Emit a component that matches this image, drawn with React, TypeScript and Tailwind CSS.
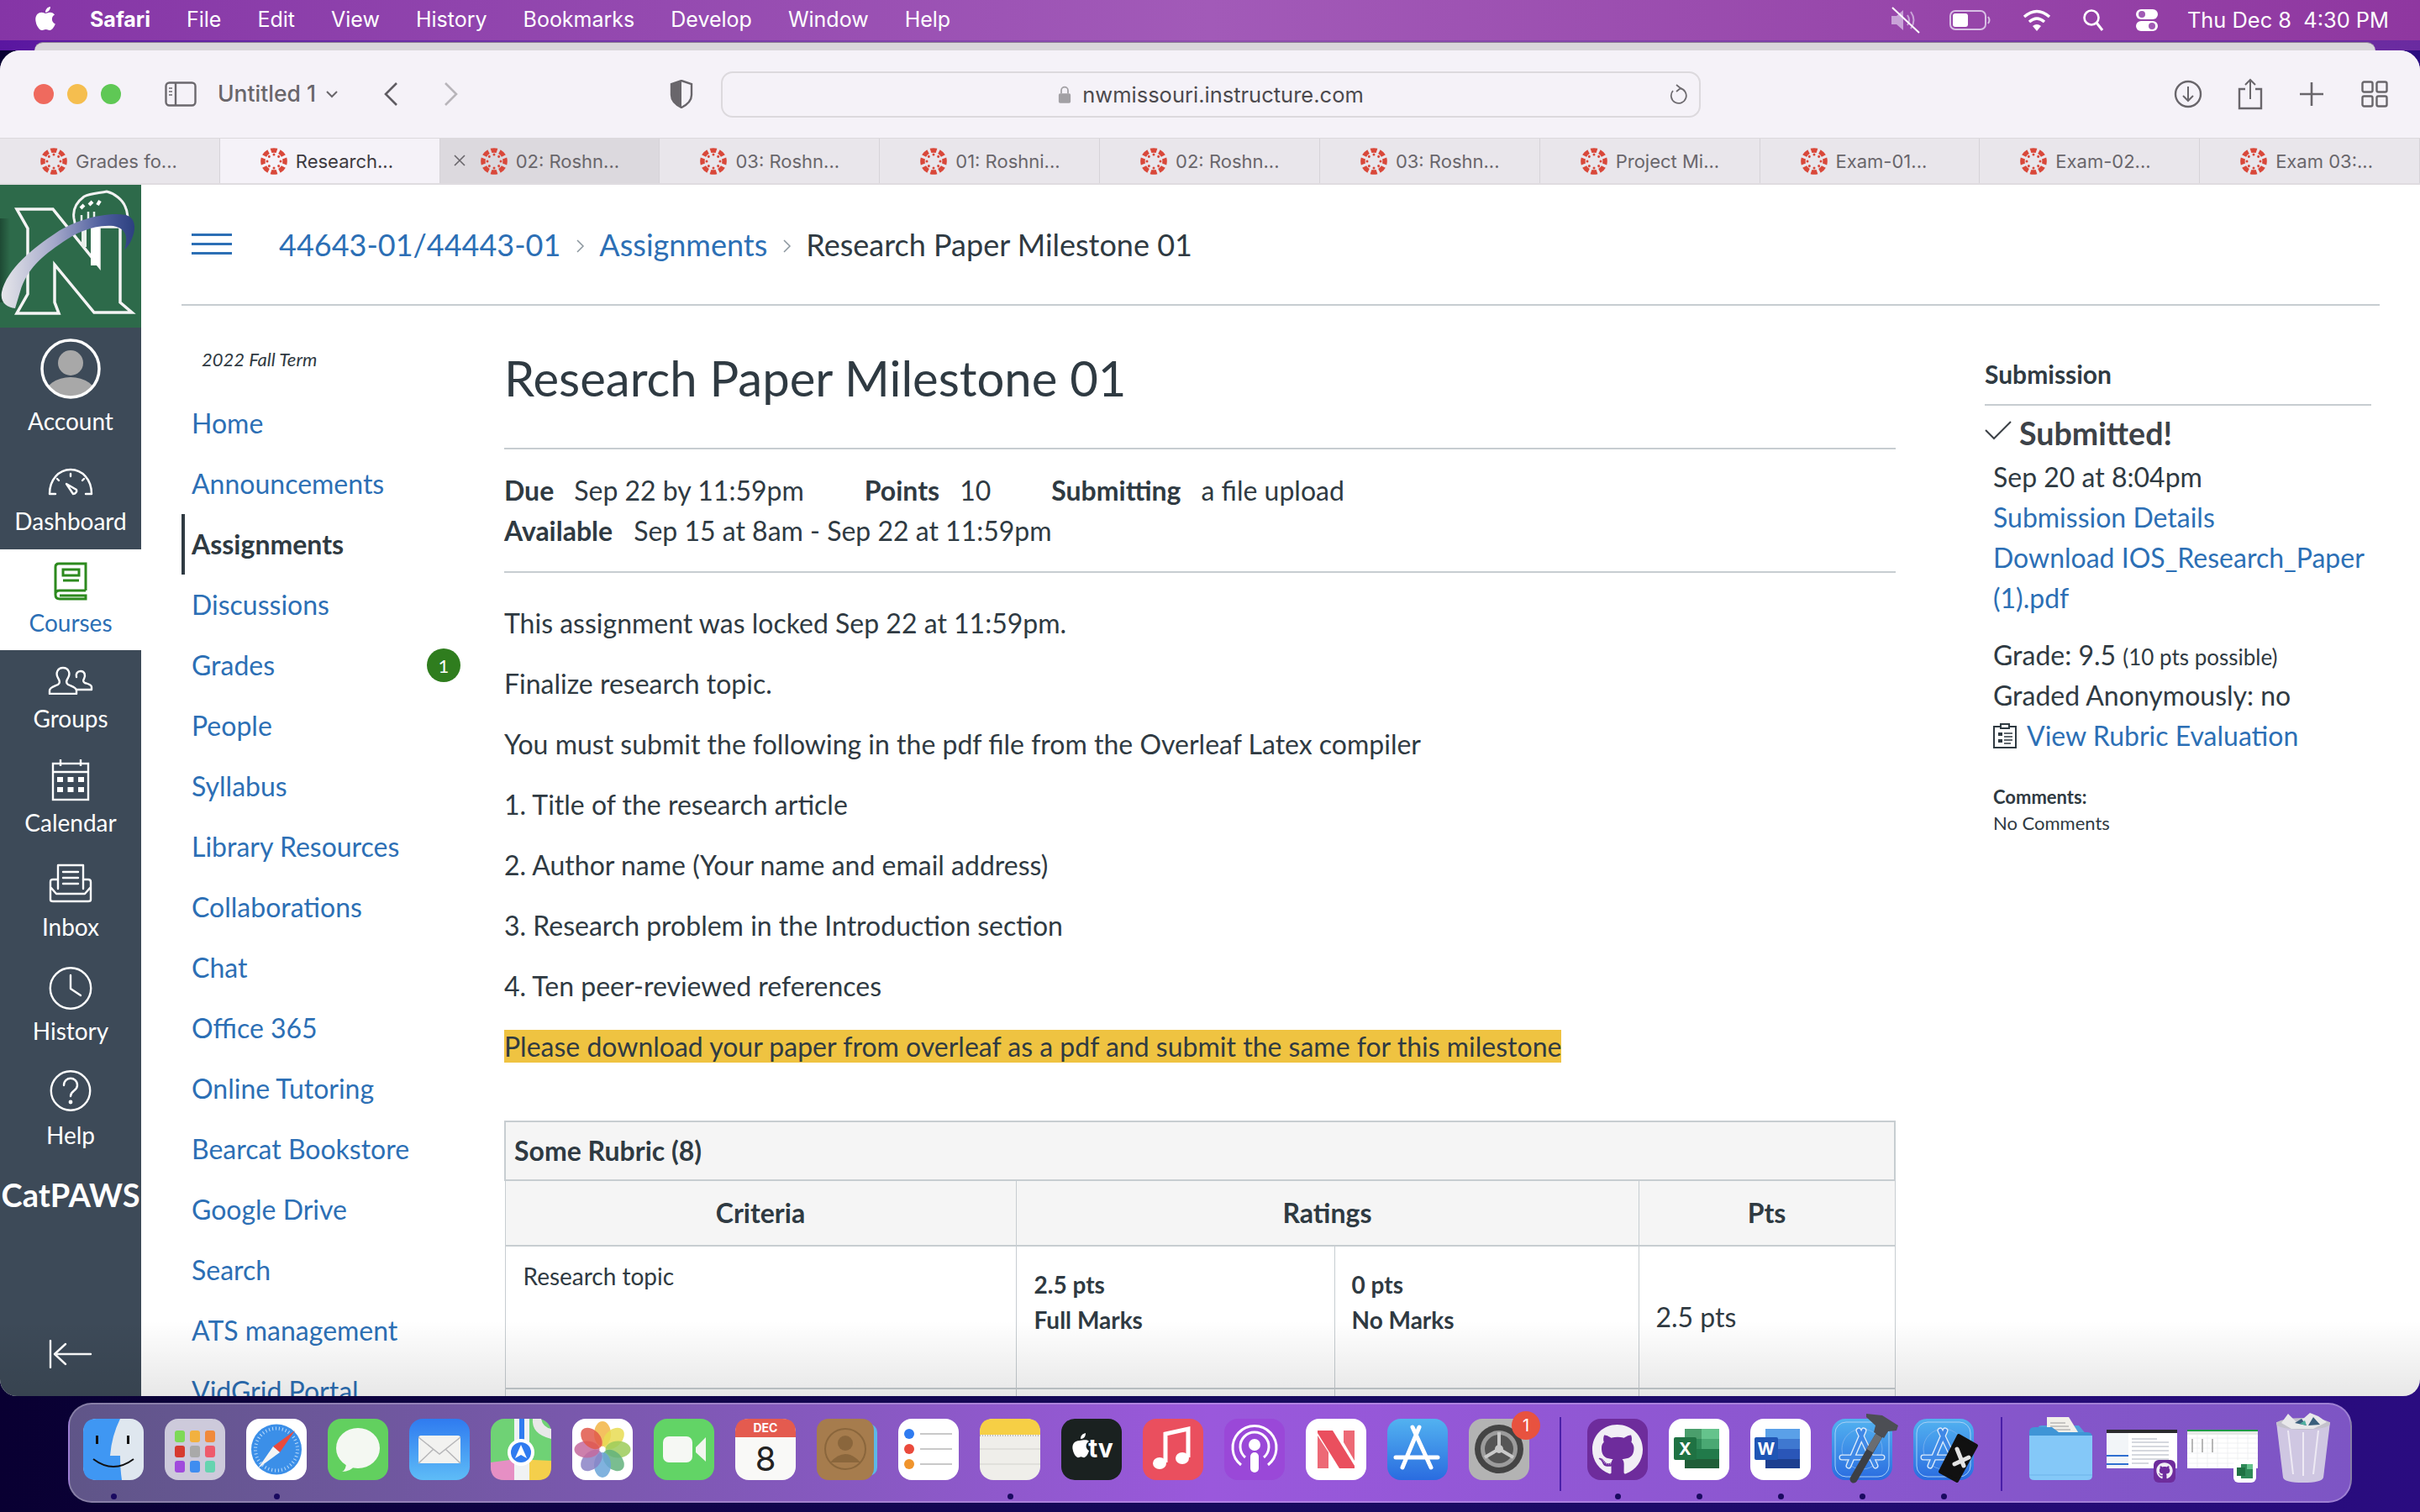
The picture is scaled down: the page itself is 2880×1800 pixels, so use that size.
import React from "react";
import { FaApple, FaGithub } from "react-icons/fa";

const Favicon = () => (
  <svg viewBox="0 0 32 32" className="w-[32px] h-[32px] shrink-0">
    {[0, 45, 90, 135, 180, 225, 270, 315].map((a) => (
      <g key={a} transform={`rotate(${a} 16 16)`}>
        <path d="M11.6 0.8 Q16 -0.4 20.4 0.8 L18.6 6 Q16 5.3 13.4 6 Z" fill="#d9483a" />
        <circle cx="16" cy="8" r="1.5" fill="#d9483a" />
      </g>
    ))}
  </svg>
);

const tabs = [
  "Grades fo...",
  "Research...",
  "02: Roshn...",
  "03: Roshn...",
  "01: Roshni...",
  "02: Roshn...",
  "03: Roshn...",
  "Project Mi...",
  "Exam-01...",
  "Exam-02...",
  "Exam 03:...",
];

const navItems = [
  "Home",
  "Announcements",
  "Assignments",
  "Discussions",
  "Grades",
  "People",
  "Syllabus",
  "Library Resources",
  "Collaborations",
  "Chat",
  "Office 365",
  "Online Tutoring",
  "Bearcat Bookstore",
  "Google Drive",
  "Search",
  "ATS management",
  "VidGrid Portal",
];

const paras = [
  "This assignment was locked Sep 22 at 11:59pm.",
  "Finalize research topic.",
  "You must submit the following in the pdf file from the Overleaf Latex compiler",
  "1. Title of the research article",
  "2. Author name (Your name and email address)",
  "3. Research problem in the Introduction section",
  "4. Ten peer-reviewed references",
];

function SideItem({ cls, labelCls, label, children, active }: { cls: string; labelCls: string; label: string; children: React.ReactNode; active?: boolean }) {
  return (
    <div className={`flex flex-col items-center w-full shrink-0 ${cls} ${active ? "bg-white" : ""}`}>
      {children}
      <div className={`h-[40px] leading-[40px] text-[28px] ${labelCls} ${active ? "text-[#2c6fb5]" : "text-white"}`}>{label}</div>
    </div>
  );
}

const Logo = () => (
  <svg viewBox="0 0 168 170" className="w-[168px] h-[170px] block shrink-0">
    <defs>
      <linearGradient id="sw" x1="0" x2="1" y1="0" y2="0">
        <stop offset="0" stopColor="#e6e6ea" />
        <stop offset="0.4" stopColor="#a4a8ca" />
        <stop offset="0.75" stopColor="#4f5f9e" />
        <stop offset="1" stopColor="#2c4080" />
      </linearGradient>
      <linearGradient id="ld" x1="0" x2="1" y1="0" y2="0">
        <stop offset="0" stopColor="#1e4a34" />
        <stop offset="1" stopColor="#2d6a4a" />
      </linearGradient>
    </defs>
    <rect width="168" height="170" fill="#2d6a4a" />
    <rect width="12" y="40" height="100" fill="url(#ld)" />
    <path d="M88 40 C86 28 92 20 100 14 C108 10 118 10 127 8 C136 10 146 18 149 26 C152 32 152 36 152 42 L143 50 H90 Z" fill="#2d6a4a" stroke="#f2f2f2" strokeWidth="3" />
    <path d="M20 29 H63 L118 97 V50 H143 V140 L157 152 H112 L65 95 V140 L70 153 H20 L33 130 V52 Z" fill="#2d6a4a" stroke="#f4f4f4" strokeWidth="3.5" strokeLinejoin="miter" />
    <rect x="108" y="40" width="10" height="56" fill="#fff" />
    <rect x="97" y="48" width="6" height="26" fill="#e8f0ea" />
    <path d="M96 28 L100 24 M106 24 L110 20 M116 24 L119 19" stroke="#fff" strokeWidth="4" />
    <path d="M97 36V44M105 32V44M112 32V44" stroke="#e8f0ea" strokeWidth="2.5" />
    <path d="M2 128 C8 100 40 75 67 57 C90 42 125 32 150 36 C160 39 163 50 157 64 C155 70 150 76 148 77 C153 62 150 52 135 49 C110 47 90 58 75 68 C50 85 32 100 24 127 L18 147 C8 146 0 140 2 128Z" fill="url(#sw)" />
  </svg>
);

const Avatar = () => (
  <svg viewBox="0 0 72 72" className="w-[72px] h-[72px]">
    <clipPath id="av"><circle cx="36" cy="36" r="33" /></clipPath>
    <g clipPath="url(#av)">
      <circle cx="36" cy="36" r="34" fill="#3d4a58" />
      <circle cx="36" cy="29" r="15" fill="#a8a8a8" />
      <ellipse cx="36" cy="68" rx="31" ry="22" fill="#a8a8a8" />
    </g>
    <circle cx="36" cy="36" r="34" fill="none" stroke="#fff" strokeWidth="3.5" />
  </svg>
);

const s = { fill: "none", stroke: "#fff", strokeWidth: 2.4, strokeLinecap: "round" as const, strokeLinejoin: "round" as const };

function Dock({ children, dot, cls }: { children: React.ReactNode; dot?: boolean; cls?: string }) {
  return (
    <div className={`relative w-[72px] shrink-0 flex flex-col items-center ${cls ?? ""}`}>
      <div className="w-[72px] h-[73px]">{children}</div>
      {dot && <div className="mt-[16px] w-[7px] h-[7px] rounded-full bg-[#1a0a60]" />}
    </div>
  );
}

const V = ({ children }: { children: React.ReactNode }) => (
  <svg viewBox="0 0 72 73" className="w-[72px] h-[73px] block overflow-visible">{children}</svg>
);

const petals = ["#f2b544", "#e8dc52", "#9ccb5b", "#63b27d", "#6aa5d8", "#8a83c6", "#c46a9e", "#e0584a"];

const XcodeA = () => (
  <>
    <rect x="4" y="4" width="64" height="65" rx="13" fill="none" stroke="#a8d0f6" strokeWidth="1" />
    <circle cx="36" cy="36" r="24" fill="none" stroke="#7fb4ee" strokeWidth="0.8" />
    <g strokeLinecap="round">
      <path d="M38 14L20 56M32 14l20 42M12 46h48" stroke="#dcebfb" strokeWidth="7" />
      <path d="M38 14L20 56M32 14l20 42M12 46h48" stroke="#3f88e6" strokeWidth="4.4" />
    </g>
  </>
);

const blueGrad = (id: string) => (
  <defs>
    <linearGradient id={id} x1="0" x2="0" y1="0" y2="1"><stop offset="0" stopColor="#52b2f0" /><stop offset="1" stopColor="#2a6ce0" /></linearGradient>
  </defs>
);

export default function App() {
  return (
    <div className="w-[2880px] h-[1800px] flex flex-col overflow-hidden bg-gradient-to-r from-[#090032] via-[#160a5c] to-[#2a0c80] font-['Lato',sans-serif] text-[#2f3a42]">
      {/* Menu bar */}
      <div className="h-[48px] shrink-0 flex items-center bg-gradient-to-r from-[#8535a6] via-[#a25ab8] to-[#8f37a0] text-white font-['Inter',sans-serif] text-[25px]">
        <FaApple className="ml-[38px] text-[32px] -mt-[4px]" />
        <span className="ml-[37px] font-bold">Safari</span>
        <div className="ml-[43px] flex gap-[43px]">
          {["File", "Edit", "View", "History", "Bookmarks", "Develop", "Window", "Help"].map((m) => (
            <span key={m}>{m}</span>
          ))}
        </div>
        <div className="ml-auto flex items-center mr-[37px]">
          <svg viewBox="0 0 38 32" className="w-[38px] h-[32px]">
            <path d="M3 11h6l8-7v24l-8-7H3z" fill="#c9a3d8" />
            <path d="M22 10q4 6 0 12M26 6q7 10 0 20" fill="none" stroke="#c9a3d8" strokeWidth="2" />
            <path d="M4 1 L36 31" stroke="#fff" strokeWidth="2" />
          </svg>
          <svg viewBox="0 0 50 24" className="ml-[34px] w-[50px] h-[24px]">
            <rect x="1" y="1" width="42" height="22" rx="6" fill="none" stroke="#d8c0e4" strokeWidth="2" />
            <rect x="4" y="4" width="18" height="16" rx="3" fill="#fff" />
            <path d="M46 8q3 4 0 8" fill="none" stroke="#d8c0e4" strokeWidth="2" />
          </svg>
          <svg viewBox="0 0 34 28" className="ml-[37px] w-[34px] h-[28px]">
            <path d="M2 10q15-13 30 0M8 16q9-8 18 0" fill="none" stroke="#fff" strokeWidth="3.4" />
            <path d="M12 21q5-4 10 0L17 27z" fill="#fff" />
          </svg>
          <svg viewBox="0 0 26 28" className="ml-[37px] w-[26px] h-[28px]">
            <circle cx="11" cy="11" r="8.5" fill="none" stroke="#fff" strokeWidth="2.6" />
            <path d="M17 17l7 9" stroke="#fff" strokeWidth="3" />
          </svg>
          <svg viewBox="0 0 28 28" className="ml-[37px] w-[28px] h-[28px]">
            <rect x="1" y="1" width="26" height="12" rx="6" fill="#fff" />
            <circle cx="8" cy="7" r="4" fill="#a05ab4" />
            <rect x="1" y="15" width="26" height="12" rx="6" fill="#fff" />
            <circle cx="20" cy="21" r="4" fill="#a05ab4" />
          </svg>
          <span className="ml-[34px] text-[25.4px] whitespace-pre">Thu Dec 8  4:30 PM</span>
        </div>
      </div>

      {/* Window behind */}
      <div className="h-[12px] shrink-0 bg-gradient-to-r from-[#5a16a0] via-[#9050ae] to-[#6a2aa0] pl-[41px] pr-[53px] pt-[2px]">
        <div className="h-[10px] rounded-t-[10px] bg-[#d9d6da] border-t border-[#8d7f94]" />
      </div>

      {/* Safari window */}
      <div className="relative h-[1602px] shrink-0 flex flex-col rounded-t-[24px] rounded-b-[20px] overflow-hidden bg-white">
        <div className="h-[104px] shrink-0 bg-[#f5f2f8] flex items-center relative">
          <div className="ml-[40px] flex gap-[16px]">
            <div className="w-[24px] h-[24px] rounded-full bg-[#ef6a5e]" />
            <div className="w-[24px] h-[24px] rounded-full bg-[#f5be4f]" />
            <div className="w-[24px] h-[24px] rounded-full bg-[#5fc855]" />
          </div>
          <svg viewBox="0 0 38 30" className="ml-[52px] w-[38px] h-[30px]">
            <rect x="1.5" y="1.5" width="35" height="27" rx="4" fill="none" stroke="#6b686d" strokeWidth="2.4" />
            <path d="M13 2v26" stroke="#6b686d" strokeWidth="2.4" />
            <path d="M5 8h4M5 12h4M5 16h4" stroke="#6b686d" strokeWidth="1.6" />
          </svg>
          <span className="ml-[25px] font-['Inter',sans-serif] text-[26.5px] font-medium text-[#69666b]">Untitled 1</span>
          <svg viewBox="0 0 16 10" className="ml-[11px] w-[16px] h-[10px]">
            <path d="M2 2l6 6 6-6" fill="none" stroke="#69666b" strokeWidth="2" />
          </svg>
          <svg viewBox="0 0 20 30" className="ml-[52px] w-[20px] h-[30px]">
            <path d="M17 2L4 15l13 13" fill="none" stroke="#5f5c62" strokeWidth="2.6" />
          </svg>
          <svg viewBox="0 0 20 30" className="ml-[52px] w-[20px] h-[30px]">
            <path d="M3 2l13 13L3 28" fill="none" stroke="#b8b5ba" strokeWidth="2.6" />
          </svg>
          <svg viewBox="0 0 28 34" className="ml-[250px] w-[28px] h-[34px]">
            <path d="M14 1l12 4v13c0 8-6 12-12 15C8 30 2 26 2 18V5z" fill="none" stroke="#69666b" strokeWidth="2.4" />
            <path d="M14 1L2 5v13c0 8 6 12 12 15z" fill="#69666b" />
          </svg>
          <div className="ml-[33px] w-[1166px] h-[55px] rounded-[14px] border-2 border-[#dcd9dd] flex items-center justify-center relative font-['Inter',sans-serif] text-[25.5px] text-[#4c4a4e]">
            <svg viewBox="0 0 18 24" className="w-[16px] h-[22px] mr-[13px] mt-[2px]">
              <rect x="1" y="10" width="16" height="13" rx="2" fill="#a2a0a4" />
              <path d="M4.5 10V6a4.5 4.5 0 0 1 9 0v4" fill="none" stroke="#a2a0a4" strokeWidth="2" />
            </svg>
            <span className="mt-[2px]">nwmissouri.instructure.com</span>
            <svg viewBox="0 0 24 26" className="absolute right-[14px] top-[13px] w-[24px] h-[26px]">
              <path d="M15 5a9 9 0 1 1-8 3" fill="none" stroke="#6e6b70" strokeWidth="1.8" />
              <path d="M11 1l5 4-5 4" fill="none" stroke="#6e6b70" strokeWidth="1.8" />
            </svg>
          </div>
          <svg viewBox="0 0 34 34" className="ml-[563px] w-[34px] h-[34px]">
            <circle cx="17" cy="17" r="15" fill="none" stroke="#69666b" strokeWidth="2.4" />
            <path d="M17 8v17M11 19l6 6 6-6" fill="none" stroke="#69666b" strokeWidth="2" />
          </svg>
          <svg viewBox="0 0 30 38" className="ml-[42px] w-[30px] h-[38px]">
            <path d="M9 13H2v23h26V13h-7" fill="none" stroke="#69666b" strokeWidth="2.4" />
            <path d="M15 25V2M9 8l6-6 6 6" fill="none" stroke="#69666b" strokeWidth="2" />
          </svg>
          <svg viewBox="0 0 28 28" className="ml-[44px] w-[28px] h-[28px]">
            <path d="M14 0v28M0 14h28" stroke="#69666b" strokeWidth="2.6" />
          </svg>
          <svg viewBox="0 0 32 32" className="ml-[45px] w-[32px] h-[32px]">
            <rect x="1.5" y="1.5" width="12" height="12" rx="2" fill="none" stroke="#69666b" strokeWidth="2.4" />
            <rect x="18.5" y="1.5" width="12" height="12" rx="2" fill="none" stroke="#69666b" strokeWidth="2.4" />
            <rect x="1.5" y="18.5" width="12" height="12" rx="2" fill="none" stroke="#69666b" strokeWidth="2.4" />
            <rect x="18.5" y="18.5" width="12" height="12" rx="2" fill="none" stroke="#69666b" strokeWidth="2.4" />
          </svg>
        </div>

        {/* Tabs */}
        <div className="h-[56px] shrink-0 flex bg-[#e9e6eb] border-t border-[#dcd9dd] border-b-2 border-b-[#dfdce0] font-['Inter',sans-serif] text-[22px] text-[#69666b]">
          {tabs.map((t, i) => (
            <div
              key={i}
              className={`flex-1 flex items-center pl-[48px] gap-[10px] border-r border-[#d6d3d8] relative ${i === 1 ? "bg-[#f5f2f8] text-[#3d3a40]" : i === 2 ? "bg-[#dcd9de]" : ""}`}
            >
              {i === 2 && (
                <svg viewBox="0 0 16 16" className="absolute left-[15px] top-[18px] w-[16px] h-[16px]">
                  <path d="M2 2l12 12M14 2L2 14" stroke="#69666b" strokeWidth="1.6" />
                </svg>
              )}
              <Favicon />
              <span className="whitespace-nowrap mt-[2px]">{t}</span>
            </div>
          ))}
        </div>

        {/* Canvas */}
        <div className="flex-1 min-h-0 flex overflow-hidden">
          <div className="w-[168px] shrink-0 flex flex-col bg-[#3d4a58]">
            <Logo />
            <SideItem cls="h-[144px] pt-[13px]" labelCls="mt-[6px]" label="Account"><Avatar /></SideItem>
            <SideItem cls="h-[120px] pt-[23px]" labelCls="mt-[10px]" label="Dashboard">
              <svg viewBox="0 0 54 33" className="w-[54px] h-[33px]" {...s}>
                <path d="M9 31H2C2 14 13 2 27 2s25 12 25 29h-7" />
                <path d="M22 19l8 12c3 0 5-3 4-5z" />
                <path d="M27 7v3M11 13l2 2M43 13l-2 2" />
              </svg>
            </SideItem>
            <SideItem cls="h-[120px] pt-[15px]" labelCls="mt-[6px]" label="Courses" active>
              <svg viewBox="0 0 40 46" className="w-[40px] h-[46px]" fill="none" stroke="#2d8a1e" strokeWidth="3">
                <path d="M38 34V2H6Q2 2 2 6v33q0 5 5 5h31v-4H7M2 38q0-4 5-4h31" />
                <rect x="11" y="9" width="19" height="7" />
                <path d="M11 22h19" />
              </svg>
            </SideItem>
            <SideItem cls="h-[118px] pt-[19px]" labelCls="mt-[8px]" label="Groups">
              <svg viewBox="0 0 54 34" className="w-[54px] h-[34px]" {...s}>
                <path d="M2 33v-4c0-4 6-5 10-7 3-2 2-5 0-8-3-5-1-12 6-12s9 7 6 12c-2 3-3 6 0 8 4 2 10 3 10 7v4z" />
                <path d="M34 28h18v-3c0-3-5-4-8-5-3-2-2-3-1-5 2-4 1-9-4-9-4 0-6 3-5 7" />
              </svg>
            </SideItem>
            <SideItem cls="h-[124px] pt-[10px]" labelCls="mt-[5px]" label="Calendar">
              <svg viewBox="0 0 46 52" className="w-[46px] h-[52px]" fill="none" stroke="#fff" strokeWidth="2.4">
                <rect x="2" y="7" width="42" height="43" />
                <path d="M2 17h42M11 2v8M35 2v8" />
                <g fill="#fff" stroke="none">
                  <rect x="7" y="23" width="7" height="6" /><rect x="19.5" y="23" width="7" height="6" /><rect x="32" y="23" width="7" height="6" />
                  <rect x="7" y="35" width="7" height="6" /><rect x="19.5" y="35" width="7" height="6" /><rect x="32" y="35" width="7" height="6" />
                </g>
              </svg>
            </SideItem>
            <SideItem cls="h-[124px] pt-[12px]" labelCls="mt-[8px]" label="Inbox">
              <svg viewBox="0 0 52 47" className="w-[52px] h-[47px]" {...s}>
                <path d="M11 30V2h30v28" />
                <path d="M17 10h18M17 17h18M17 24h18" />
                <path d="M11 19H5q-3 0-3 3v21q0 2 3 2h42q3 0 3-2V22q0-3-3-3h-6M2 28l7 8h34l7-8" />
              </svg>
            </SideItem>
            <SideItem cls="h-[124px] pt-[11px]" labelCls="mt-[5px]" label="History">
              <svg viewBox="0 0 52 51" className="w-[52px] h-[51px]" {...s}>
                <circle cx="26" cy="25.5" r="24.2" />
                <path d="M26 10v16l12 8" />
              </svg>
            </SideItem>
            <SideItem cls="h-[126px] pt-[10px]" labelCls="mt-[8px]" label="Help">
              <svg viewBox="0 0 50 49" className="w-[50px] h-[49px]" {...s}>
                <circle cx="25" cy="24.5" r="23.2" />
                <path d="M17 18c0-11 16-11 16 0 0 7-8 6-8 13" />
                <circle cx="25" cy="38" r="1.2" fill="#fff" />
              </svg>
            </SideItem>
            <div className="pt-[12px] h-[52px] shrink-0 text-center font-bold text-white text-[38px] leading-[40px] whitespace-nowrap">CatPAWS</div>
            <div className="mt-auto mb-[33px] flex justify-center">
              <svg viewBox="0 0 52 34" className="w-[52px] h-[34px]" {...s}>
                <path d="M2 1v32M50 17H9M20 5L7 17l13 12" />
              </svg>
            </div>
          </div>

          <div className="flex-1 min-w-0 flex flex-col pl-[48px] pr-[48px]">
            <div className="h-[144px] shrink-0 border-b-2 border-[#c7cdd1] flex items-center pl-[12px] text-[36px]">
              <div className="w-[48px] flex flex-col gap-[8px] mb-[2px]">
                <div className="h-[3px] bg-[#2c6fb5]" />
                <div className="h-[3px] bg-[#2c6fb5]" />
                <div className="h-[3px] bg-[#2c6fb5]" />
              </div>
              <span className="ml-[56px] text-[#2c6fb5]">44643-01/44443-01</span>
              <svg viewBox="0 0 12 18" className="ml-[18px] w-[12px] h-[18px] mt-[4px]">
                <path d="M2 2l7 7-7 7" fill="none" stroke="#8b969e" strokeWidth="1.5" />
              </svg>
              <span className="ml-[16px] text-[#2c6fb5]">Assignments</span>
              <svg viewBox="0 0 12 18" className="ml-[18px] w-[12px] h-[18px] mt-[4px]">
                <path d="M2 2l7 7-7 7" fill="none" stroke="#8b969e" strokeWidth="1.5" />
              </svg>
              <span className="ml-[16px]">Research Paper Milestone 01</span>
            </div>

            <div className="flex-1 min-h-0 flex">
              {/* Course nav */}
              <div className="w-[384px] shrink-0">
                <div className="mt-[49px] ml-[24px] h-[30px] leading-[30px] italic text-[22px]">2022 Fall Term</div>
                <div className="mt-[25px] flex flex-col">
                  {navItems.map((n) => (
                    <div
                      key={n}
                      className={`h-[72px] shrink-0 flex items-center text-[32px] pr-[20px] ${n === "Assignments" ? "font-bold border-l-4 border-[#2f3a42] pl-[8px] text-[#2f3a42]" : "pl-[12px] text-[#2c6fb5]"}`}
                    >
                      <span>{n}</span>
                      {n === "Grades" && (
                        <span className="ml-auto mr-[32px] w-[40px] h-[40px] rounded-full bg-[#2f7d1e] text-white text-[22px] flex items-center justify-center">1</span>
                      )}
                    </div>
                  ))}
                </div>
              </div>

              {/* Main */}
              <div className="w-[1656px] shrink-0">
                <h1 className="mt-[41px] h-[90px] leading-[90px] text-[58px] font-normal">Research Paper Milestone 01</h1>
                <div className="mt-[38px] border-t-2 border-b-2 border-[#c7cdd1] h-[149px] pt-[25px] text-[32px] leading-[48px]">
                  <div className="flex">
                    <b>Due</b><span className="ml-[24px]">Sep 22 by 11:59pm</span>
                    <b className="ml-[72px]">Points</b><span className="ml-[24px]">10</span>
                    <b className="ml-[72px]">Submitting</b><span className="ml-[24px]">a file upload</span>
                  </div>
                  <div className="flex">
                    <b>Available</b><span className="ml-[25px]">Sep 15 at 8am - Sep 22 at 11:59pm</span>
                  </div>
                </div>
                <div className="mt-[36px] flex flex-col gap-[24px] text-[32px] leading-[48px] items-start">
                  {paras.map((p) => (
                    <p key={p}>{p}</p>
                  ))}
                  <p><span className="bg-[#efc341]">Please download your paper from overleaf as a pdf and submit the same for this milestone</span></p>
                </div>
                <table className="mt-[64px] w-[1654px] table-fixed border-collapse text-[32px]">
                  <colgroup>
                    <col className="w-[608px]" />
                    <col className="w-[379px]" />
                    <col className="w-[362px]" />
                    <col className="w-[305px]" />
                  </colgroup>
                  <thead>
                    <tr className="h-[70px] bg-[#f5f5f5]">
                      <th colSpan={4} className="border-2 border-[#c7cdd1] text-left pl-[10px] font-bold">Some Rubric (8)</th>
                    </tr>
                    <tr className="h-[78px] bg-[#f5f5f5]">
                      <th className="border-x border-b-2 border-[#c7cdd1] font-bold">Criteria</th>
                      <th colSpan={2} className="border-x border-b-2 border-[#c7cdd1] font-bold">Ratings</th>
                      <th className="border-x border-b-2 border-[#c7cdd1] font-bold">Pts</th>
                    </tr>
                  </thead>
                  <tbody>
                    <tr className="h-[170px]">
                      <td className="border-x border-b-2 border-[#c7cdd1] align-top pl-[21px] pt-[16px] text-[28px] leading-[38px]">Research topic</td>
                      <td className="border-x border-b-2 border-[#c7cdd1] align-top pl-[21px] pt-[24px] text-[28px] leading-[42px] font-bold">2.5 pts<br />Full Marks</td>
                      <td className="border-x border-b-2 border-[#c7cdd1] align-top pl-[20px] pt-[24px] text-[28px] leading-[42px] font-bold">0 pts<br />No Marks</td>
                      <td className="border-x border-b-2 border-[#c7cdd1] pl-[20px] text-[32px]">2.5 pts</td>
                    </tr>
                    <tr className="h-[60px]">
                      <td className="border-x border-[#c7cdd1]" />
                      <td className="border-x border-[#c7cdd1]" />
                      <td className="border-x border-[#c7cdd1]" />
                      <td className="border-x border-[#c7cdd1]" />
                    </tr>
                  </tbody>
                </table>
              </div>

              {/* Aside */}
              <div className="ml-[106px] w-[460px] shrink-0 text-[32px] leading-[48px]">
                <div className="mt-[62px] pb-[17px] border-b-2 border-[#c7cdd1] font-bold text-[30px] leading-[38px]">Submission</div>
                <div className="mt-[9px] flex items-center h-[48px]">
                  <svg viewBox="0 0 32 24" className="w-[32px] h-[24px] -mt-[8px]">
                    <path d="M1 12l10 10L31 2" fill="none" stroke="#3b4046" strokeWidth="2" />
                  </svg>
                  <span className="ml-[9px] font-bold text-[37.6px] text-[#3d4248]">Submitted!</span>
                </div>
                <div className="pl-[10px]">
                  <div className="mt-[4px]">Sep 20 at 8:04pm</div>
                  <div className="text-[#2c6fb5]">Submission Details</div>
                  <div className="text-[#2c6fb5]">Download IOS_Research_Paper<br />(1).pdf</div>
                  <div className="mt-[20px] h-[48px]">Grade: 9.5 <span className="text-[26px]">(10 pts possible)</span></div>
                  <div>Graded Anonymously: no</div>
                  <div className="flex items-center">
                    <svg viewBox="0 0 28 30" className="w-[28px] h-[30px] mr-[12px]">
                      <rect x="1" y="4" width="26" height="25" fill="none" stroke="#2f3a42" strokeWidth="2" />
                      <rect x="9" y="1" width="10" height="5" fill="#fff" stroke="#2f3a42" strokeWidth="2" />
                      <rect x="6" y="11" width="5" height="4" fill="#2f3a42" />
                      <rect x="6" y="19" width="5" height="4" fill="#2f3a42" />
                      <path d="M13 12h10M13 16h10M13 20h10M13 24h8" stroke="#2f3a42" strokeWidth="1.5" />
                    </svg>
                    <span className="text-[#2c6fb5]">View Rubric Evaluation</span>
                  </div>
                  <div className="mt-[34px] text-[22px] leading-[30px] font-bold">Comments:</div>
                  <div className="text-[22px] leading-[32px]">No Comments</div>
                </div>
              </div>
            </div>
          </div>
        </div>
        <div className="absolute left-0 right-0 bottom-0 h-[90px] bg-gradient-to-b from-[#ffffff00] to-[#00000018] pointer-events-none" />
      </div>

      {/* Dock */}
      <div className="pt-[8px] pl-[81px]">
        <div className="w-[2718px] h-[119px] rounded-[28px] border-2 border-[#ffffff40] bg-gradient-to-r from-[#5f5588] via-[#9a58dc] to-[#7d55c4] pl-[16px] pt-[17px] flex items-start gap-[25px]">
          <Dock dot>
            <V>
              <rect width="72" height="73" rx="16" fill="#dfe7ef" />
              <path d="M16 0H44Q34 20 32 44H44Q44 60 46 73H16Q0 73 0 57V16Q0 0 16 0Z" fill="#3f97f3" />
              <rect x="15" y="20" width="3" height="10" fill="#111" />
              <rect x="52" y="20" width="3" height="10" fill="#111" />
              <path d="M12 48q24 18 48 0" fill="none" stroke="#111" strokeWidth="2" />
            </V>
          </Dock>
          <Dock>
            <V>
              <rect width="72" height="73" rx="16" fill="#cdcadb" />
              {["#7ed957", "#f2b13f", "#f08a3c", "#d63a2f", "#a9a9a9", "#ee5a6c", "#a04bdc", "#3f8df0", "#66d4b0"].map((c, i) => (
                <rect key={c} x={12 + (i % 3) * 18} y={14 + Math.floor(i / 3) * 18} width="12" height="14" rx="3" fill={c} />
              ))}
            </V>
          </Dock>
          <Dock dot>
            <V>
              <rect width="72" height="73" rx="16" fill="#fff" />
              <circle cx="36" cy="36.5" r="30" fill="#3b8fe8" />
              <circle cx="36" cy="36.5" r="25" fill="none" stroke="#bcdcfa" strokeWidth="4" strokeDasharray="1 3" />
              <path d="M58 14L32 33l8 7z" fill="#ea4a3c" />
              <path d="M14 59l18-26 8 7z" fill="#f5f5f5" />
            </V>
          </Dock>
          <Dock>
            <V>
              <rect width="72" height="73" rx="16" fill="#62d05f" />
              <ellipse cx="36" cy="35" rx="26" ry="24" fill="#f4f8f2" />
              <path d="M22 52q0 9-5 11 10 0 15-7z" fill="#f4f8f2" />
            </V>
          </Dock>
          <Dock>
            <V>
              <defs>
                <linearGradient id="ml" x1="0" x2="0" y1="0" y2="1"><stop offset="0" stopColor="#2f7bf0" /><stop offset="1" stopColor="#5ebcf7" /></linearGradient>
              </defs>
              <rect width="72" height="73" rx="16" fill="url(#ml)" />
              <rect x="11" y="20" width="50" height="33" rx="3" fill="#f2f2f0" />
              <path d="M11 22l25 20 25-20M11 53l18-17M61 53L43 36" fill="none" stroke="#b6b6b8" strokeWidth="1.5" />
            </V>
          </Dock>
          <Dock>
            <V>
              <rect width="72" height="73" rx="16" fill="#6fd275" />
              <path d="M0 52L30 48V73H16Q0 73 0 57Z" fill="#e68fc4" />
              <path d="M30 48L72 50V57Q72 73 56 73H38Z" fill="#f4cf4b" />
              <path d="M28 0h18v73H28z" fill="#f0f2f4" />
              <path d="M34 0h6v34h-6z" fill="#2f7bf0" />
              <path d="M50 0Q48 18 72 24V12Q62 10 60 0Z" fill="#e8e8e8" />
              <circle cx="36" cy="40" r="16" fill="#fff" />
              <circle cx="36" cy="40" r="12" fill="#2f7bf0" />
              <path d="M36 31l7 16-7-4-7 4z" fill="#fff" />
            </V>
          </Dock>
          <Dock>
            <V>
              <rect width="72" height="73" rx="16" fill="#fff" />
              {petals.map((c, i) => (
                <ellipse key={c} cx="36" cy="18" rx="10" ry="15" fill={c} fillOpacity="0.85" transform={`rotate(${i * 45} 36 36.5)`} />
              ))}
            </V>
          </Dock>
          <Dock>
            <V>
              <rect width="72" height="73" rx="16" fill="#62d466" />
              <rect x="11" y="21" width="35" height="31" rx="7" fill="#f6f8f4" />
              <path d="M50 34l12-12v29L50 40z" fill="#f0f6ee" />
            </V>
          </Dock>
          <Dock>
            <V>
              <rect width="72" height="73" rx="16" fill="#f9f9f7" />
              <path d="M16 0H56Q72 0 72 16V22H0V16Q0 0 16 0Z" fill="#e45b4f" />
              <text x="36" y="16" textAnchor="middle" fontSize="14" fontWeight="700" fill="#fff" fontFamily="Inter">DEC</text>
              <text x="36" y="62" textAnchor="middle" fontSize="40" fill="#222" fontFamily="Inter">8</text>
            </V>
          </Dock>
          <Dock>
            <V>
              <rect x="6" y="6" width="66" height="62" rx="10" fill="#5cb8e8" />
              <rect width="68" height="73" rx="14" fill="#a67c4d" />
              <circle cx="34" cy="36" r="24" fill="none" stroke="#8a663c" strokeWidth="2" />
              <circle cx="34" cy="29" r="9" fill="#8a663c" />
              <path d="M16 52q18-20 36 0" fill="#8a663c" />
            </V>
          </Dock>
          <Dock>
            <V>
              <rect width="72" height="73" rx="16" fill="#fff" />
              <circle cx="13" cy="18" r="6" fill="#2f7bf0" /><circle cx="13" cy="36" r="6" fill="#ea4a3c" /><circle cx="13" cy="54" r="6" fill="#f0942c" />
              <path d="M26 18h38M26 36h38M26 54h38" stroke="#c9c9c9" strokeWidth="2" />
            </V>
          </Dock>
          <Dock dot>
            <V>
              <rect width="72" height="73" rx="16" fill="#efeeea" />
              <path d="M16 0H56Q72 0 72 16V19H0V16Q0 0 16 0Z" fill="#f6cf45" />
              <path d="M0 36h72M0 54h72" stroke="#dcdbd6" strokeWidth="1.5" />
              <path d="M0 20h72" stroke="#b9b8b2" strokeWidth="2" strokeDasharray="1 2" />
            </V>
          </Dock>
          <Dock>
            <V>
              <rect width="72" height="73" rx="16" fill="#1a2120" />
              <text x="47" y="46" textAnchor="middle" fontSize="30" fontWeight="700" fill="#fff" fontFamily="Inter">tv</text>
              <path d="M22 26c-7 0-10 5-8 12 1 4 4 9 7 8 2-1 3-1 5 0 3 1 6-4 7-8-5-3-4-9 0-11-3-3-8-1-11-1zM23 24c0-4 2-6 6-7 0 4-2 7-6 7z" fill="#fff" />
            </V>
          </Dock>
          <Dock>
            <V>
              <rect width="72" height="73" rx="16" fill="#ea4f5e" />
              <path d="M27 52V18l27-6v34" fill="none" stroke="#fff" strokeWidth="5" />
              <ellipse cx="20" cy="53" rx="8" ry="7" fill="#fff" /><ellipse cx="47" cy="47" rx="8" ry="7" fill="#fff" />
            </V>
          </Dock>
          <Dock>
            <V>
              <rect width="72" height="73" rx="16" fill="#9a48d8" />
              <g fill="none" stroke="#fff" strokeWidth="3">
                <path d="M20 55a26 26 0 1 1 32 0" /><path d="M25 46a17 17 0 1 1 22 0" />
              </g>
              <circle cx="36" cy="31" r="7" fill="#fff" />
              <rect x="31" y="40" width="10" height="24" rx="5" fill="#fff" />
            </V>
          </Dock>
          <Dock>
            <V>
              <rect width="72" height="73" rx="16" fill="#fff" />
              <path d="M14 14H32L58 56V59H40L14 17Z" fill="#ea4f5e" />
              <path d="M14 20V59H27V40ZM58 14V50L45 28V14Z" fill="#ea4f5e" opacity=".85" />
            </V>
          </Dock>
          <Dock>
            <V>
              {blueGrad("ap")}
              <rect width="72" height="73" rx="16" fill="url(#ap)" />
              <path d="M38 10L18 58M30 10l22 48M10 46h50" stroke="#fff" strokeWidth="5" strokeLinecap="round" />
            </V>
          </Dock>
          <Dock>
            <V>
              <rect width="72" height="73" rx="16" fill="#b3b3b3" />
              <circle cx="36" cy="36" r="29" fill="#444" />
              <circle cx="36" cy="36" r="22" fill="#9c9c9c" />
              <circle cx="36" cy="36" r="17" fill="#555" />
              <path d="M36 36V16M36 36l-17 10M36 36l17 10" stroke="#c9c9c9" strokeWidth="4" />
              <circle cx="36" cy="36" r="5" fill="#c9c9c9" />
            </V>
            <div className="absolute -right-[13px] -top-[9px] w-[34px] h-[34px] rounded-full bg-[#e8523f] text-white text-[20px] flex items-center justify-center font-['Inter',sans-serif]">1</div>
          </Dock>

          <div className="ml-[11px] mt-[-2px] w-[2px] h-[88px] bg-[#4a1fa8]" />

          <Dock dot cls="ml-[6px]">
            <V>
              <rect width="72" height="73" rx="16" fill="#6e2c9c" />
              <FaGithub x={5} y={6} size={62} color="#f1eef5" />
            </V>
          </Dock>
          <Dock dot>
            <V>
              <rect width="72" height="73" rx="16" fill="#fff" />
              <rect x="19" y="12" width="41" height="12" fill="#4a9e6c" />
              <rect x="39" y="12" width="21" height="12" fill="#65c38c" />
              <rect x="19" y="24" width="41" height="12" fill="#2f8a58" />
              <rect x="39" y="24" width="21" height="12" fill="#4aa873" />
              <rect x="19" y="36" width="41" height="12" fill="#217a4a" />
              <rect x="19" y="48" width="41" height="11" fill="#1f5e38" />
              <rect x="6" y="22" width="27" height="27" rx="2" fill="#1f7243" />
              <text x="19.5" y="43" textAnchor="middle" fontSize="20" fontWeight="700" fill="#fff" fontFamily="Inter">X</text>
            </V>
          </Dock>
          <Dock dot>
            <V>
              <rect width="72" height="73" rx="16" fill="#fff" />
              <rect x="18" y="12" width="41" height="12" fill="#5aa0e8" />
              <rect x="18" y="24" width="41" height="12" fill="#3f78d0" />
              <rect x="18" y="36" width="41" height="12" fill="#2a56b8" />
              <rect x="18" y="48" width="41" height="11" fill="#1c3f90" />
              <rect x="5" y="22" width="28" height="27" rx="2" fill="#1f55b5" />
              <text x="19" y="43" textAnchor="middle" fontSize="20" fontWeight="700" fill="#fff" fontFamily="Inter">W</text>
            </V>
          </Dock>
          <Dock dot>
            <V>
              {blueGrad("xc")}
              <rect width="72" height="73" rx="16" fill="url(#xc)" />
              <XcodeA />
              <path d="M26 72L56 20" stroke="#3c3f45" strokeWidth="9" strokeLinecap="round" />
              <path d="M45 38L56 20" stroke="#6a6d72" strokeWidth="9" />
              <path d="M41 -6L60 -4 79 8 77 14 67 15 62 23 50 16 52 8 41 -2Z" fill="#4c4e54" />
            </V>
          </Dock>
          <Dock dot>
            <V>
              {blueGrad("si")}
              <rect width="72" height="73" rx="16" fill="url(#si)" />
              <XcodeA />
              <path d="M54 20L75 32 52 74 32 63Z" fill="#111" stroke="#111" strokeWidth="4" strokeLinejoin="round" />
              <path d="M52 36L60 56M49 54L66 46" stroke="#e4e4e4" strokeWidth="5" strokeLinecap="round" />
            </V>
          </Dock>

          <div className="ml-[7px] mt-[-2px] w-[2px] h-[88px] bg-[#4a1fa8]" />

          <Dock cls="ml-[8px]">
            <V>
              <path d="M10 10Q10 8 14 8H58L68 20V22H10Z" fill="#4f9fdc" />
              <path d="M20 -2H46L62 24H20Z" fill="#f2f0ea" />
              <path d="M24 5H42M24 9H46M24 13H48" stroke="#9a9a9a" strokeWidth="1" />
              <path d="M-1 16Q-1 10 5 10H26L34 16H68Q74 16 74 22V30H-1Z" fill="#3f95d6" />
              <path d="M-1 20H74V68Q74 73 68 73H5Q-1 73 -1 68Z" fill="#84c8f8" />
              <path d="M-1 67H74" stroke="#6db4ea" strokeWidth="1" />
            </V>
          </Dock>
          <Dock>
            <V>
              <rect x="-6" y="13" width="84" height="46" fill="#fff" />
              <rect x="-6" y="13" width="84" height="4" fill="#2a2a2e" />
              <rect x="-6" y="17" width="26" height="42" fill="#f2f5f8" />
              <rect x="-6" y="43" width="26" height="2" fill="#2f6fd0" />
              <rect x="-6" y="53" width="26" height="2" fill="#2f6fd0" />
              <path d="M24 24h30M24 28h44M24 33h44M24 38h44M24 43h44M24 48h44M24 53h20" stroke="#c8ccd4" strokeWidth="1.4" />
              <rect x="50" y="49" width="26" height="27" rx="6" fill="#6e2c9c" />
              <FaGithub x={53} y={52} size={20} color="#f1eef5" />
            </V>
          </Dock>
          <Dock>
            <V>
              <rect x="-7" y="13" width="84" height="46" fill="#fff" />
              <rect x="-7" y="13" width="84" height="2" fill="#1f9a46" />
              <rect x="-7" y="15" width="84" height="4" fill="#e6eae6" />
              <path d="M-7 23h84M-7 29h84M-7 35h84M-7 41h84M-7 47h84M-7 53h84M5 19v40M17 19v40M29 19v40M41 19v40M53 19v40M65 19v40" stroke="#eceef0" strokeWidth="0.8" />
              <path d="M-1 24v16M11 24v16M23 24v16" stroke="#9a9a9a" strokeWidth="1.4" />
              <rect x="48" y="49" width="27" height="27" rx="6" fill="#fff" />
              <rect x="57" y="54" width="14" height="17" fill="#2f8a58" />
              <rect x="64" y="54" width="7" height="6" fill="#65c38c" />
              <rect x="52" y="58" width="10" height="10" fill="#1f7243" />
            </V>
          </Dock>
          <Dock>
            <V>
              <path d="M2 4L66 4 58 70Q56 76 34 76 12 76 10 70Z" fill="#d8d4e4" fillOpacity="0.9" />
              <path d="M16 14L22 66M34 16V68M52 14L46 66" stroke="#eeeaf4" strokeWidth="2" />
              <ellipse cx="34" cy="6" rx="32" ry="7" fill="#c4c2cc" />
              <path d="M8 5L16 -6 26 4 34 0 42 -7 52 -3 62 4 46 12H20Z" fill="#e8e8ea" />
              <path d="M24 5L32 0 38 8ZM40 8L46 -2 54 7Z" fill="#3a5f7c" />
              <path d="M30 6L36 2 38 8Z" fill="#4fb0a0" />
            </V>
          </Dock>
        </div>
      </div>
    </div>
  );
}
